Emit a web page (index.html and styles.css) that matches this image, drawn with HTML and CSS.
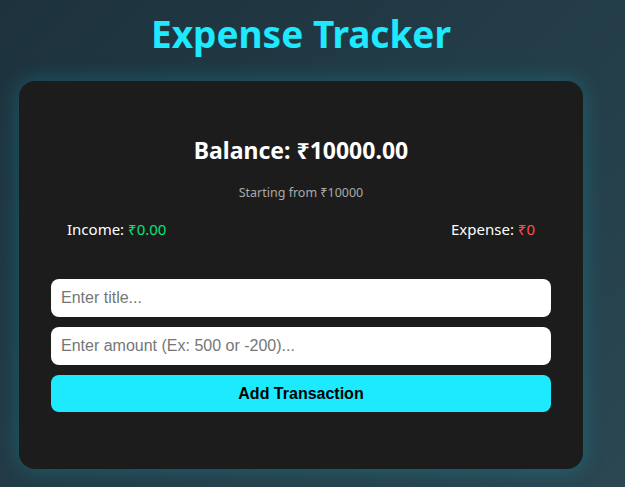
FILE: index.html
```html
<!DOCTYPE html>
<html>
<head>
<meta charset="utf-8">
<link rel="stylesheet" href="styles.css">
</head>
<body>
<div class="page">
  <h1 class="title">Expense Tracker</h1>
  <div class="card">
    <h2 class="balance">Balance: ₹10000.00</h2>
    <p class="start">Starting from ₹10000</p>
    <div class="summary">
      <span>Income: <span class="inc">₹0.00</span></span>
      <span>Expense: <span class="exp">₹0</span></span>
    </div>
    <form class="form">
      <input class="field" type="text" placeholder="Enter title...">
      <input class="field" type="text" placeholder="Enter amount (Ex: 500 or -200)...">
      <button class="btn" type="button">Add Transaction</button>
    </form>
  </div>
</div>
</body>
</html>
```
FILE: styles.css
```css
html, body {
  margin: 0;
  height: 100%;
}
body {
  background: linear-gradient(135deg, #1d323d, #233c47 50%, #2a4752);
  font-family: "Noto Sans", "Open Sans", sans-serif;
  color: #fff;
  overflow: hidden;
}
.page {
  width: 564px;
  margin-left: 19px;
  display: flex;
  flex-direction: column;
}
.title {
  margin: 9px 0 0;
  height: 72px;
  text-align: center;
  font-size: 37px;
  font-weight: 700;
  color: #1de9ff;
  line-height: 50px;
}
.card {
  background: #1c1c1c;
  border-radius: 16px;
  box-shadow: 0 0 22px rgba(0, 230, 255, 0.22);
  padding: 52px 32px 56px;
  height: 388px;
  box-sizing: border-box;
  display: flex;
  flex-direction: column;
}
.balance {
  margin: 0;
  text-align: center;
  font-size: 23px;
  font-weight: 700;
  line-height: 34px;
}
.start {
  margin: 17px 0 0;
  text-align: center;
  font-size: 12.5px;
  color: #aaa;
  line-height: 18px;
}
.summary {
  display: flex;
  justify-content: space-between;
  padding: 0 16px;
  margin-top: 17px;
  font-size: 15px;
  line-height: 20px;
}
.inc { color: #00e676; }
.exp { color: #ff4d4d; }
.form {
  margin-top: 40px;
  display: flex;
  flex-direction: column;
  gap: 10px;
}
.field {
  height: 38px;
  box-sizing: border-box;
  border: none;
  border-radius: 8px;
  padding: 0 10px;
  font-family: "Liberation Sans", Arial, sans-serif;
  font-size: 16px;
  background: #fff;
  outline: none;
}
.field::placeholder { color: #767676; }
.btn {
  height: 37px;
  border: none;
  border-radius: 8px;
  background: #1de9ff;
  color: #000;
  font-family: "Liberation Sans", Arial, sans-serif;
  font-size: 16px;
  font-weight: 700;
}
```
